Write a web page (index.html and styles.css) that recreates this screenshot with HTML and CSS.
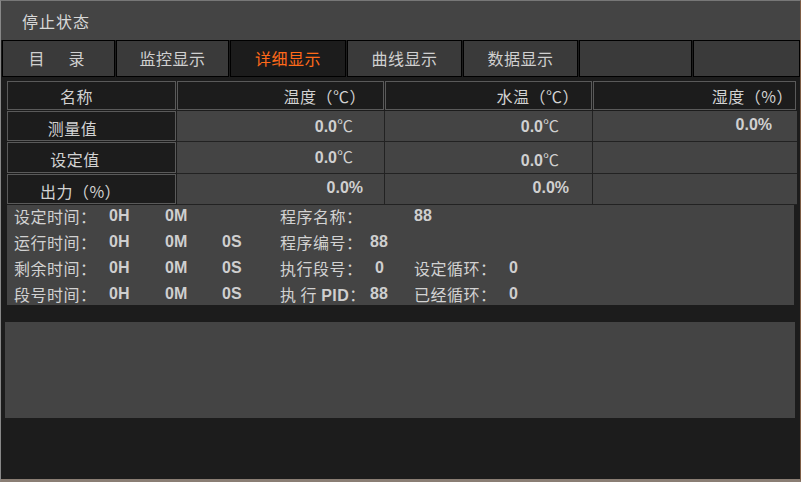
FILE: index.html
```html
<!DOCTYPE html>
<html lang="zh-CN">
<head>
  <meta charset="UTF-8" />
  <title>详细显示</title>
  <link rel="stylesheet" href="styles.css">
</head>
<body>

  <div class="window">
    <div class="titlebar">停止状态</div>

    <div class="tabs">
      <div class="tab t113 wide">目　录</div>
      <div class="tab t113">监控显示</div>
      <div class="tab t116 active">详细显示</div>
      <div class="tab t115">曲线显示</div>
      <div class="tab t115">数据显示</div>
      <div class="tab t113"></div>
      <div class="tab rest"></div>
    </div>

    <div class="grid">
      <div class="hd name">名称</div>
      <div class="hd p17">温度（℃）</div>
      <div class="hd p12">水温（℃）</div>
      <div class="hd p2">湿度（%）</div>

      <div class="hd name low n1">测量值</div>
      <div class="val p31">0.0<span class="deg">℃</span></div>
      <div class="val p33">0.0<span class="deg">℃</span></div>
      <div class="val p25 last">0.0%</div>

      <div class="hd name low n2">设定值</div>
      <div class="val p31">0.0<span class="deg">℃</span></div>
      <div class="val p33 low">0.0<span class="deg">℃</span></div>
      <div class="val last"></div>

      <div class="hd name low n3">出力（%）</div>
      <div class="val p21">0.0%</div>
      <div class="val p23">0.0%</div>
      <div class="val last"></div>
    </div>

    <div class="info">
      <div class="info-row">
        <span>设定时间：</span><b>0H</b><b>0M</b><b></b>
        <span>程序名称：</span><b></b><b>88</b><b></b>
      </div>
      <div class="info-row">
        <span>运行时间：</span><b>0H</b><b>0M</b><b>0S</b>
        <span>程序编号：</span><b>88</b><span></span><b></b>
      </div>
      <div class="info-row">
        <span>剩余时间：</span><b>0H</b><b>0M</b><b>0S</b>
        <span>执行段号：</span><b class="nudge">0</b><span>设定循环：</span><b>0</b>
      </div>
      <div class="info-row">
        <span>段号时间：</span><b>0H</b><b>0M</b><b>0S</b>
        <span>执 行 <b>PID</b>：</span><b>88</b><span>已经循环：</span><b>0</b>
      </div>
    </div>

    <div class="chart-box"></div>
  </div>

</body>
</html>
```

FILE: styles.css
```css
body {
  margin: 0;
  background: #1c1c1c;
  font-family: "Noto Sans CJK SC", "Liberation Sans", sans-serif;
  color: #d2d2d2;
  overflow: hidden;
}

.window {
  width: 801px;
  height: 482px;
  box-sizing: border-box;
  border-top: 1px solid #777;
  border-left: 1px solid #888;
  border-right: 1px solid #7d5d45;
  border-bottom: 3px solid #8a7e74;
  background: #1c1c1c;
}

.titlebar {
  height: 39px;
  line-height: 40px;
  padding-left: 21px;
  background: #444;
  font-size: 16px;
  letter-spacing: 1px;
  color: #d8d8d8;
}

.tabs {
  display: flex;
  gap: 1px;
  height: 37px;
  padding-left: 1px;
  background: #1c1c1c;
}

.tab {
  flex: none;
  box-sizing: border-box;
  border: 1px solid #000;
  background: #3a3a3a;
  text-align: center;
  line-height: 34px;
  font-size: 16px;
  letter-spacing: 0.5px;
  color: #d0d0d0;
}

.t113 { width: 113px; }
.t115 { width: 115px; }
.t116 { width: 116px; }
.tab.rest { flex: 1; }

.tab.wide {
  letter-spacing: 4px;
}

.tab.active {
  background: #1c1c1c;
  color: #ff6a1a;
}

.grid {
  display: grid;
  grid-template-columns: 170px 208px 208px 204px;
  grid-template-rows: 30px 31px 32px 31px;
  margin: 4px 6px 0 6px;
}

.hd {
  box-sizing: border-box;
  border: 1px solid #5a5a5a;
  margin: 0 1px 1px 0;
  background: #1c1c1c;
  font-size: 16px;
  letter-spacing: 0.5px;
  line-height: 28px;
  text-align: right;
}

.hd.name {
  text-align: center;
  padding-right: 30px;
}

.hd.n1 { padding-right: 38px; }
.hd.n2 { padding-right: 33px; }
.hd.n3 { padding-right: 22px; }

.hd.low {
  line-height: 32px;
}

.val.low {
  line-height: 34px;
}

.val {
  box-sizing: border-box;
  background: #444;
  border-right: 1px solid #222;
  border-bottom: 1px solid #222;
  text-align: right;
  font-family: "Liberation Sans", "Noto Sans CJK SC", sans-serif;
  font-weight: bold;
  font-size: 16px;
  line-height: 28px;
  color: #d0d0d0;
}

.val .deg {
  font-family: "Noto Sans CJK SC", sans-serif;
  font-weight: normal;
}

.val.last {
  border-right: none;
}

.p2 { padding-right: 2px; }
.p12 { padding-right: 12px; }
.p17 { padding-right: 17px; }
.p21 { padding-right: 21px; }
.p23 { padding-right: 23px; }
.p25 { padding-right: 25px; }
.p31 { padding-right: 31px; }
.p33 { padding-right: 33px; }

.info {
  height: 100px;
  margin: 0 6px;
  padding-left: 7px;
  background: #444;
}

.info-row {
  display: grid;
  grid-template-columns: 95px 56px 57px 58px 90px 44px 95px 60px;
  height: 26px;
  line-height: 22px;
  font-size: 16px;
  white-space: nowrap;
}

.info-row:last-child {
  height: 22px;
}

.info-row span {
  letter-spacing: 0.5px;
}

.info-row b {
  font-family: "Liberation Sans", "Noto Sans CJK SC", sans-serif;
  font-weight: bold;
  font-size: 16px;
  color: #cfcfcf;
}

.info-row .nudge {
  padding-left: 5px;
}

.chart-box {
  height: 96px;
  margin: 17px 5px 0 4px;
  background: #444;
}
```
